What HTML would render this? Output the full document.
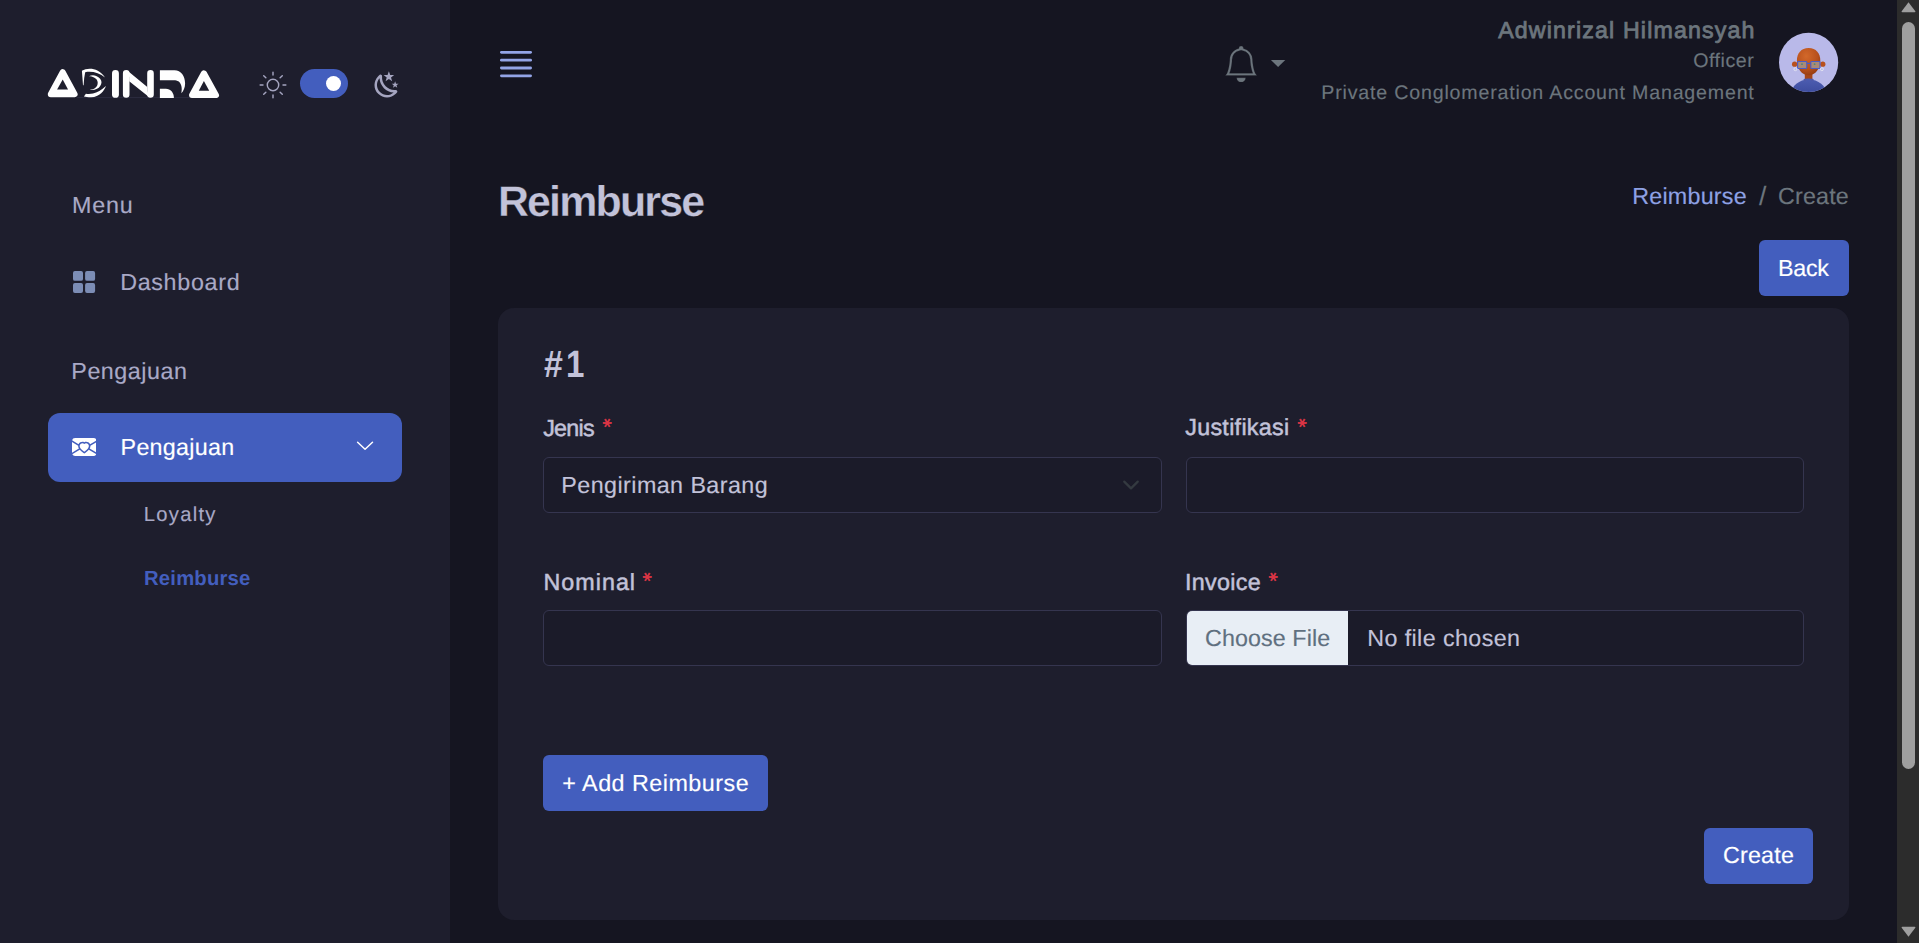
<!DOCTYPE html>
<html lang="id">
<head>
<meta charset="utf-8">
<title>Reimburse - Create</title>
<style>
*{box-sizing:border-box}
html,body{margin:0;padding:0}
body{width:1919px;height:943px;overflow:hidden;position:relative;background:#151521;
  font-family:"Liberation Sans",sans-serif;color:#c2c2d9}
.abs{position:absolute;display:block}
.sr-only{position:absolute;width:1px;height:1px;margin:-1px;padding:0;overflow:hidden;clip:rect(0,0,0,0);white-space:nowrap;border:0}
.t{position:absolute;white-space:nowrap;line-height:1;font-weight:400;-webkit-text-stroke:.15px currentColor;text-rendering:geometricPrecision}
#sidebar{left:0;top:0;width:450px;height:943px;background:#1e1e2d}
.side-title{color:#a9a9c6}
.side-link{color:#a9a9c6}
.side-act{color:#fff}
.sub-link{color:#a9a9c6}
.sub-act{color:#435ebe;font-weight:700;-webkit-text-stroke:0}
.u-name{color:#6c757d;font-weight:400;-webkit-text-stroke:.8px currentColor}
.u-sub{color:#6c757d}
.page-h{color:#c2c2d9;font-weight:700;-webkit-text-stroke:.3px #151521}
.bc-link{color:#8ea1e4}
.bc-mut{color:#6c757d}
.btn-t{color:#fff}
.card-h{color:#c2c2d9;font-weight:700;-webkit-text-stroke:0}
.lbl{color:#c2c2d9;-webkit-text-stroke:.5px currentColor}
.inp-t{color:#c2c2d9}
.file-b{color:#607080}
.star{color:#dc3545;font-family:"DejaVu Sans","Liberation Sans",sans-serif;font-weight:400;-webkit-text-stroke:.7px currentColor;transform:rotate(90deg)}
.btn{background:#435ebe;border-radius:6px}
.inp{background:#1b1b29;border:1px solid #35354f;border-radius:6px}
#item-act{left:48px;top:413px;width:354px;height:69px;border-radius:12px;background:#435ebe}
#card{left:498px;top:308px;width:1351px;height:612px;border-radius:16px;background:#1e1e2d}
#sb-track{left:1897px;top:0;width:22px;height:943px;background:#2c2c2c}
#sb-thumb{left:1902px;top:22px;width:13px;height:747px;border-radius:6.5px;background:#9f9f9f}
</style>
</head>
<body>

<!-- ============ SIDEBAR ============ -->
<aside id="sidebar" class="abs">
  <svg id="logo" class="abs" style="left:40px;top:60px" width="190" height="45" viewBox="40 60 190 45" role="img" aria-label="ADINDA">
    <title>ADINDA</title>
    <rect x="77" y="97.1" width="113" height="1" fill="#2c2c40"/>
    <g fill="#fefefe" stroke="#fefefe" stroke-linejoin="round" stroke-linecap="round">
      <path d="M62.7 72.1 L74.6 94.2 L50.8 94.2 Z" stroke-width="6"/>
      <path d="M203.9 73.3 L216 95.1 L192 95.1 Z" stroke-width="6"/>
      <path d="M115.45 73.5 V94.4" stroke-width="6.9" fill="none"/>
      <path d="M126.2 94.5 V73.4 M150.5 94.5 V73.4" stroke-width="6.6" fill="none"/>
      <path d="M127.3 70.5 L147.3 87.1 L147.3 91 L149.6 97.4 L129.2 81.2 L129.2 77 Z" stroke="none"/>
    </g>
    <g fill="#1e1e2d">
      <path d="M62.7 79.6 L68.05 89.6 L57.1 89.6 Z"/>
      <path d="M203.9 80.9 L209.2 90.7 L198.8 90.7 Z"/>
    </g>
    <g fill="#fefefe">
      <path d="M81.9 70.7 C87.5 67.6 98.5 67.2 105 77.6 C99.5 72.6 91.5 71 85.2 72.2 Q83.9 78 83.6 85.2 L83 85.2 Z"/>
      <path d="M105.9 86 C104.5 90.5 99.5 97.4 90.8 97.2 C88 97.2 85.5 96.9 83.9 96.5 L85.9 93.8 C88.5 94.2 91 94 93 93.6 C97 92.8 101.6 89.8 105.9 86 Z"/>
      <path d="M89 76.3 C91 75 94 74.9 96.2 75.9 C99.6 77.3 101.6 79.6 101.5 82.2 C101.4 85 99.6 87.5 97 88.8 C94.8 89.9 92.2 90.2 89.9 89.8 C92 89.5 93.8 89 95.1 88 C96.8 86.8 97.8 84.9 97.7 82.5 C97.6 80.4 96.3 78.6 94 77.5 C92.6 76.7 90.8 76.3 89 76.3 Z"/>
      <path d="M159.9 70.2 L174.5 70.2 C181 70.2 185.1 76 185.1 83.4 C185.1 87.5 183.5 91 181.3 93.2 C182.4 88.5 181.5 84 178.8 81.6 C177.2 80.5 175.5 80.3 173.9 80.3 L159.9 80.3 Z"/>
      <path d="M159.9 88.7 L165.9 88.7 C170.5 88.7 173.9 92.5 173.9 97.9 L159.9 97.9 Z"/>
    </g>
  </svg>
  <svg class="abs" style="left:258px;top:70px;color:#a5a5c0" width="30" height="30" viewBox="0 0 21 21" aria-hidden="true">
    <g fill="none" fill-rule="evenodd" stroke="currentColor" stroke-linecap="round" stroke-linejoin="round">
      <g transform="translate(-210 -1)">
        <path d="M220.5 2.5v2m6.5.5l-1.5 1.5"/>
        <circle cx="220.5" cy="11.5" r="4"/>
        <path d="m214 5l1.5 1.5m5 14v-2m6.5-.5l-1.5-1.5M214 18l1.5-1.5m-4-5h2m14 0h2"/>
      </g>
    </g>
  </svg>
  <div class="abs" style="left:299.8px;top:68.8px;width:48.4px;height:29.1px;border-radius:15px;background:#435ebe">
    <div class="abs" style="left:26px;top:7px;width:15.6px;height:15.6px;border-radius:50%;background:#fff"></div>
  </div>
  <svg class="abs" style="left:371.7px;top:70px;color:#a5a5c0" width="30" height="30" viewBox="0 0 24 24" aria-hidden="true">
    <path fill="currentColor" d="m17.75 4.09l-2.53 1.94l.91 3.06l-2.63-1.81l-2.63 1.81l.91-3.06l-2.53-1.94L12.44 4l1.06-3l1.06 3l3.19.09m3.5 6.91l-1.64 1.25l.59 1.98l-1.7-1.17l-1.7 1.17l.59-1.98L15.75 11l2.06-.05L18.5 9l.69 1.95l2.06.05m-2.28 4.95c.83-.08 1.72 1.1 1.19 1.85c-.32.45-.66.87-1.08 1.27C15.17 23 8.84 23 4.94 19.07c-3.91-3.9-3.91-10.24 0-14.14c.4-.4.82-.76 1.27-1.08c.75-.53 1.93.36 1.85 1.19c-.27 2.86.69 5.83 2.89 8.02a9.96 9.96 0 0 0 8.02 2.89m-1.64 2.02a12.08 12.08 0 0 1-7.8-3.47c-2.17-2.19-3.33-5-3.49-7.82c-2.81 3.14-2.7 7.96.31 10.98c3.02 3.01 7.84 3.12 10.98.31Z"/>
  </svg>
  <span class="sr-only">ADINDA</span>
  <nav>
    <span id="menu" class="t side-title" style="left:71.97px;top:194.30px;font-size:23.30px;letter-spacing:0.846px">Menu</span>
    <svg class="abs" style="left:70px;top:268px" width="28" height="28" viewBox="70 268 28 28" aria-hidden="true">
      <g fill="#7c8db5">
        <rect x="73" y="271" width="10" height="9.8" rx="1.9"/>
        <rect x="85.1" y="271" width="10" height="9.8" rx="1.9"/>
        <rect x="73" y="283.1" width="10" height="9.8" rx="1.9"/>
        <rect x="85.1" y="283.1" width="10" height="9.8" rx="1.9"/>
      </g>
    </svg>
    <span id="dash" class="t side-link" style="left:120.15px;top:271.29px;font-size:23.30px;letter-spacing:0.685px">Dashboard</span>
    <span id="pengt" class="t side-title" style="left:71.34px;top:359.84px;font-size:23.30px;letter-spacing:0.519px">Pengajuan</span>
    <div id="item-act" class="abs"></div>
    <svg class="abs" style="left:71.8px;top:434.7px" width="24.6" height="24" viewBox="0 0 16 16" preserveAspectRatio="none" aria-hidden="true">
      <path fill="#fff" d="M.05 3.555A2 2 0 0 1 2 2h12a2 2 0 0 1 1.95 1.555l-4.2 2.568-.051-.105c-.666-1.3-2.363-1.917-3.699-1.25-1.336-.667-3.033-.05-3.699 1.25l-.05.105zM11.584 8.91l-.073.139L16 11.8V4.697l-4.003 2.447c.027.562-.107 1.163-.413 1.767Zm-4.135 3.05c-1.048-.693-1.84-1.39-2.398-2.082L.19 12.856A2 2 0 0 0 2 14h12a2 2 0 0 0 1.808-1.144L10.95 9.878c-.559.692-1.35 1.389-2.398 2.081L8 12.324l-.551-.365ZM4.416 8.91c-.306-.603-.44-1.204-.413-1.766L0 4.697v7.104l4.49-2.752z"/>
      <path fill="#fff" d="M8 5.993c1.664-1.711 5.825 1.283 0 5.132-5.825-3.85-1.664-6.843 0-5.132"/>
    </svg>
    <span id="penga" class="t side-act" style="left:120.59px;top:436.21px;font-size:23.30px;letter-spacing:0.274px">Pengajuan</span>
    <svg class="abs" style="left:355px;top:440px" width="20" height="13" viewBox="355 440 20 13" aria-hidden="true">
      <path d="M357.6 442.2 L365.05 449.2 L372.5 442.2" fill="none" stroke="#fff" stroke-width="1.5" stroke-linecap="round" stroke-linejoin="round"/>
    </svg>
    <span id="loyal" class="t sub-link" style="left:143.82px;top:505.10px;font-size:20.20px;letter-spacing:1.273px">Loyalty</span>
    <span id="reimsub" class="t sub-act" style="left:144.03px;top:569.43px;font-size:20.30px;letter-spacing:0.190px">Reimburse</span>
  </nav>
</aside>

<!-- ============ HEADER ============ -->
<header>
  <svg class="abs" style="left:498px;top:48px" width="36" height="32" viewBox="498 48 36 32" aria-hidden="true">
    <g fill="#93a4e6">
      <rect x="500" y="50.9" width="32" height="2.8" rx="1.4"/>
      <rect x="500" y="58.75" width="32" height="2.8" rx="1.4"/>
      <rect x="500" y="66.6" width="32" height="2.8" rx="1.4"/>
      <rect x="500" y="74.45" width="32" height="2.8" rx="1.4"/>
    </g>
  </svg>
  <svg class="abs" style="left:1222.6px;top:45.9px" width="36.3" height="36.3" viewBox="0 0 16 16" aria-hidden="true">
    <path fill="#6c757d" stroke="#151521" stroke-width="0.1" d="M8 16a2 2 0 0 0 2-2H6a2 2 0 0 0 2 2zM8 1.918l-.797.161A4.002 4.002 0 0 0 4 6c0 .628-.134 2.197-.459 3.742-.16.767-.376 1.566-.663 2.258h10.244c-.287-.692-.502-1.49-.663-2.258C12.134 8.197 12 6.628 12 6a4.002 4.002 0 0 0-3.203-3.92L8 1.917zM14.22 12c.223.447.481.801.78 1H1c.299-.199.557-.553.78-1C2.68 10.2 3 6.88 3 6c0-2.42 1.72-4.44 4.005-4.901a1 1 0 1 1 1.99 0A5.002 5.002 0 0 1 13 6c0 .88.32 4.2 1.22 6z"/>
  </svg>
  <svg class="abs" style="left:1269px;top:58px" width="18" height="11" viewBox="1269 58 18 11" aria-hidden="true">
    <path d="M1270.9 59.9 H1285.3 L1278.1 67.1 Z" fill="#6c757d"/>
  </svg>
  <span id="uname" class="t u-name" style="left:1498.15px;top:18.95px;font-size:23.20px;letter-spacing:1.156px">Adwinrizal Hilmansyah</span>
  <span id="urole" class="t u-sub" style="left:1693.14px;top:51.56px;font-size:19.60px;letter-spacing:0.560px">Officer</span>
  <span id="udept" class="t u-sub" style="left:1321.32px;top:83.80px;font-size:19.60px;letter-spacing:0.819px">Private Conglomeration Account Management</span>
  <svg class="abs" style="left:1778px;top:32px" width="62" height="62" viewBox="1778 32 62 62" role="img" aria-label="avatar">
    <defs>
      <clipPath id="avc"><circle cx="1808.6" cy="62.4" r="29.6"/></clipPath>
      <radialGradient id="avh" cx="0.4" cy="0.3" r="0.8">
        <stop offset="0" stop-color="#d2682a"/><stop offset="0.6" stop-color="#b8501c"/><stop offset="1" stop-color="#8a3712"/>
      </radialGradient>
      <linearGradient id="avb" x1="0" y1="0" x2="0" y2="1">
        <stop offset="0" stop-color="#4c5cb0"/><stop offset="0.5" stop-color="#3b4a9c"/><stop offset="1" stop-color="#2f3c86"/>
      </linearGradient>
    </defs>
    <circle cx="1808.6" cy="62.4" r="29.6" fill="#b9b9e9"/>
    <g clip-path="url(#avc)">
      <ellipse cx="1808.8" cy="94" rx="17.5" ry="14.5" fill="url(#avb)"/>
      <rect x="1804.8" y="72" width="7.6" height="8.5" fill="#a5461a"/>
      <ellipse cx="1808.6" cy="79.8" rx="5.2" ry="1.4" fill="#4a5aae"/>
      <circle cx="1794.6" cy="64.2" r="2.6" fill="#b8501c"/>
      <circle cx="1822.8" cy="64.2" r="2.6" fill="#b8501c"/>
      <path d="M1808.6 48 C1816.2 48 1820.3 53.5 1820.3 60.5 C1820.3 68.5 1815.6 75.2 1808.6 75.2 C1801.6 75.2 1796.9 68.5 1796.9 60.5 C1796.9 53.5 1801 48 1808.6 48 Z" fill="url(#avh)"/>
      <g fill="#a98a78" stroke="#4b5cc4" stroke-width="1.1">
        <rect x="1797.6" y="61.5" width="9.2" height="7" rx="0.8"/>
        <rect x="1810.8" y="61.5" width="9.2" height="7" rx="0.8"/>
      </g>
      <path d="M1806.8 63.3 H1810.8" stroke="#4b5cc4" stroke-width="1.3"/>
      <circle cx="1802" cy="64.2" r="0.9" fill="#4d8a7a"/>
      <circle cx="1814.6" cy="64.2" r="0.9" fill="#4d8a7a"/>
      <circle cx="1795.4" cy="69.2" r="1.5" fill="none" stroke="#e4e4f0" stroke-width="0.9"/>
      <circle cx="1821.9" cy="69.2" r="1.5" fill="none" stroke="#e4e4f0" stroke-width="0.9"/>
    </g>
  </svg>
</header>

<!-- ============ PAGE ============ -->
<main>
  <span id="h3" class="t page-h" style="left:497.93px;top:181.43px;font-size:42.90px;letter-spacing:-1.823px">Reimburse</span>
  <span id="bc1" class="t bc-link" style="left:1632.24px;top:185.26px;font-size:23.30px;letter-spacing:0.226px">Reimburse</span><span id="bcs" class="t bc-mut" style="left:1758.88px;top:182.52px;font-size:26.50px;letter-spacing:0.000px">/</span><span id="bc2" class="t bc-mut" style="left:1778.09px;top:185.21px;font-size:23.30px;letter-spacing:0.149px">Create</span>
  <div class="abs btn" style="left:1759px;top:240px;width:90px;height:56px"></div>
  <span id="back" class="t btn-t" style="left:1777.96px;top:257.17px;font-size:23.30px;letter-spacing:-0.286px">Back</span>

  <section id="card" class="abs"></section>
  <span id="numh" class="t card-h" style="left:544.02px;top:345.83px;font-size:38.20px;letter-spacing:0.000px;transform:scaleX(0.8890);transform-origin:0 0">#</span><span id="num1" class="t card-h" style="left:566.45px;top:345.83px;font-size:38.20px;letter-spacing:0.000px;transform:scaleX(0.8665);transform-origin:0 0">1</span>
  <span id="ljenis" class="t lbl" style="left:543.20px;top:416.97px;font-size:23.30px;letter-spacing:-0.751px">Jenis</span><span id="sjenis" class="t star" style="left:599.07px;top:414.13px;font-size:17.79px">*</span>
  <span id="ljust" class="t lbl" style="left:1185.22px;top:416.43px;font-size:23.30px;letter-spacing:0.299px">Justifikasi</span><span id="sjust" class="t star" style="left:1293.77px;top:414.43px;font-size:17.79px">*</span>
  <div class="abs inp" style="left:543px;top:457px;width:619px;height:56px"></div>
  <span id="selv" class="t inp-t" style="left:561.37px;top:473.79px;font-size:23.30px;letter-spacing:0.430px">Pengiriman Barang</span>
  <svg class="abs" style="left:1121.5px;top:476px" width="18" height="18" viewBox="0 0 16 16" aria-hidden="true">
    <path fill="none" stroke="#343a40" stroke-linecap="round" stroke-linejoin="round" stroke-width="2" d="m2 5 6 6 6-6"/>
  </svg>
  <div class="abs inp" style="left:1186px;top:457px;width:618px;height:56px"></div>
  <span id="lnom" class="t lbl" style="left:543.47px;top:570.79px;font-size:23.30px;letter-spacing:1.020px">Nominal</span><span id="snom" class="t star" style="left:638.77px;top:567.83px;font-size:17.79px">*</span>
  <span id="linv" class="t lbl" style="left:1184.98px;top:570.79px;font-size:23.30px;letter-spacing:0.334px">Invoice</span><span id="sinv" class="t star" style="left:1265.17px;top:567.83px;font-size:17.79px">*</span>
  <div class="abs inp" style="left:543px;top:610px;width:619px;height:56px"></div>
  <div class="abs inp" style="left:1186px;top:610px;width:618px;height:56px;overflow:hidden">
    <div class="abs" style="left:0;top:0;bottom:0;width:161px;background:#e8eef5"></div>
  </div>
  <span id="choose" class="t file-b" style="left:1205.05px;top:627.20px;font-size:23.30px;letter-spacing:0.074px">Choose File</span>
  <span id="nofile" class="t inp-t" style="left:1367.18px;top:627.29px;font-size:23.30px;letter-spacing:0.405px">No file chosen</span>
  <div class="abs btn" style="left:543px;top:755px;width:225px;height:56px"></div>
  <span id="addr" class="t btn-t" style="left:562.34px;top:771.68px;font-size:23.30px;letter-spacing:0.496px">+ Add Reimburse</span>
  <div class="abs btn" style="left:1704px;top:828px;width:109px;height:56px"></div>
  <span id="create" class="t btn-t" style="left:1723.03px;top:843.96px;font-size:23.30px;letter-spacing:0.182px">Create</span>
</main>

<!-- ============ SCROLLBAR ============ -->
<div id="sb-track" class="abs"></div>
<div id="sb-thumb" class="abs"></div>
<svg class="abs" style="left:1897px;top:0" width="22" height="943" viewBox="0 0 22 943">
  <path d="M11.5 2.2 L18.3 11.3 Q18.8 12.3 17.7 12.3 L5.3 12.3 Q4.2 12.3 4.7 11.3 Z" fill="#9f9f9f"/>
  <path d="M11.5 936.8 L18.3 927.7 Q18.8 926.7 17.7 926.7 L5.3 926.7 Q4.2 926.7 4.7 927.7 Z" fill="#9f9f9f"/>
</svg>

</body>
</html>
